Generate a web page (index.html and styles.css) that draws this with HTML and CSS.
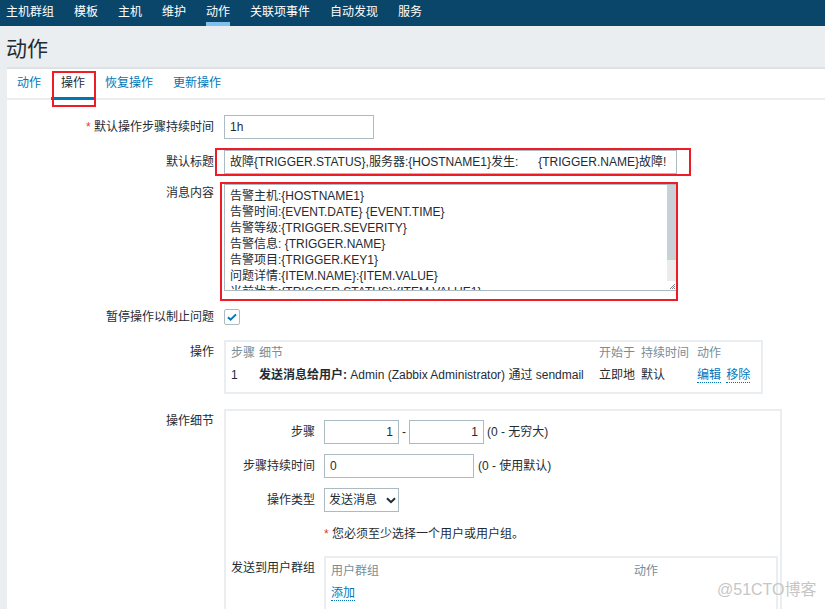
FILE: index.html
```html
<!DOCTYPE html>
<html lang="zh-CN">
<head>
<meta charset="utf-8">
<title>动作</title>
<link rel="stylesheet" href="styles.css">
</head>
<body>
<nav class="topnav">
  <a class="nav-item">主机群组</a>
  <a class="nav-item">模板</a>
  <a class="nav-item">主机</a>
  <a class="nav-item">维护</a>
  <a class="nav-item active">动作</a>
  <a class="nav-item">关联项事件</a>
  <a class="nav-item">自动发现</a>
  <a class="nav-item">服务</a>
</nav>
<header class="page-header"><h1 class="page-title">动作</h1></header>
<main class="panel">
  <div class="tabs">
    <a class="tab link">动作</a>
    <a class="tab active">操作</a>
    <a class="tab link">恢复操作</a>
    <a class="tab link">更新操作</a>
  </div>
  <div class="form">
    <div class="row r1">
      <div class="label"><span class="req">*</span> 默认操作步骤持续时间</div>
      <div class="control"><div class="input w150">1h</div></div>
    </div>
    <div class="row r2">
      <div class="label">默认标题</div>
      <div class="control"><div class="input w453 pre">故障{TRIGGER.STATUS},服务器:{HOSTNAME1}发生:      {TRIGGER.NAME}故障!</div></div>
    </div>
    <div class="row r3">
      <div class="label label-ta">消息内容</div>
      <div class="control">
        <div class="textarea">
          <div class="ta-text">
            <div>告警主机:{HOSTNAME1}</div>
            <div>告警时间:{EVENT.DATE} {EVENT.TIME}</div>
            <div>告警等级:{TRIGGER.SEVERITY}</div>
            <div>告警信息: {TRIGGER.NAME}</div>
            <div>告警项目:{TRIGGER.KEY1}</div>
            <div>问题详情:{ITEM.NAME}:{ITEM.VALUE}</div>
            <div>当前状态:{TRIGGER.STATUS}:{ITEM.VALUE1}</div>
          </div>
          <div class="ta-scroll">
            <div class="ta-thumb"></div>
            <div class="ta-track"></div>
            <div class="ta-grip">
              <svg width="9" height="9" viewBox="0 0 9 9"><path d="M7 3h1v1H7zM5 5h1v1H5zM7 5h1v1H7zM3 7h1v1H3zM5 7h1v1H5zM7 7h1v1H7zM6 4h1v1H6zM4 6h1v1H4zM6 6h1v1H6z" fill="#7a8791"/></svg>
            </div>
          </div>
        </div>
      </div>
    </div>
    <div class="row r4">
      <div class="label label-cb">暂停操作以制止问题</div>
      <div class="control">
        <div class="checkbox">
          <svg width="14" height="14" viewBox="0 0 14 14"><path d="M3 7.2l2.6 2.5L11 4.4" fill="none" stroke="#0275b8" stroke-width="2"/></svg>
        </div>
      </div>
    </div>
    <div class="row r5">
      <div class="label">操作</div>
      <div class="control">
        <div class="ops-box">
          <table class="ops">
            <thead>
              <tr><th class="c1">步骤</th><th class="c2">细节</th><th class="c3">开始于</th><th class="c4">持续时间</th><th class="c5">动作</th></tr>
            </thead>
            <tbody>
              <tr><td class="c1">1</td><td class="c2"><b>发送消息给用户:</b> Admin (Zabbix Administrator) 通过 sendmail</td><td class="c3">立即地</td><td class="c4">默认</td><td class="c5"><a class="dlink">编辑</a> <a class="dlink gap">移除</a></td></tr>
            </tbody>
          </table>
        </div>
      </div>
    </div>
    <div class="row r6">
      <div class="label">操作细节</div>
      <div class="control">
        <div class="details">
          <div class="drow">
            <div class="dlabel">步骤</div>
            <div class="dcontrol">
              <div class="input w75 right">1</div>
              <span class="dash">-</span>
              <div class="input w75 right">1</div>
              <span class="hint">(0 - 无穷大)</span>
            </div>
          </div>
          <div class="drow">
            <div class="dlabel">步骤持续时间</div>
            <div class="dcontrol">
              <div class="input w150">0</div>
              <span class="hint hint2">(0 - 使用默认)</span>
            </div>
          </div>
          <div class="drow">
            <div class="dlabel">操作类型</div>
            <div class="dcontrol">
              <div class="select">发送消息
                <svg class="chev" width="10" height="7" viewBox="0 0 10 7"><path d="M1 1.2l4 4 4-4" fill="none" stroke="#1f2c33" stroke-width="2"/></svg>
              </div>
            </div>
          </div>
          <div class="drow">
            <div class="dlabel"></div>
            <div class="dcontrol"><span class="req">*</span>&nbsp;您必须至少选择一个用户或用户组。</div>
          </div>
          <div class="drow">
            <div class="dlabel">发送到用户群组</div>
            <div class="dcontrol">
              <div class="groups">
                <div class="g-head"><span class="g-name">用户群组</span><span class="g-act">动作</span></div>
                <div class="g-add"><a class="dlink">添加</a></div>
              </div>
            </div>
          </div>
        </div>
      </div>
    </div>
  </div>
</main>
<div class="mark mark-tab"></div>
<div class="mark mark-title"></div>
<div class="mark mark-msg"></div>
<div class="watermark">@51CTO博客</div>
</body>
</html>
```

FILE: styles.css
```css
html, body {
  margin: 0;
  padding: 0;
}
body {
  width: 825px;
  height: 609px;
  overflow: hidden;
  position: relative;
  background: #ebeef0;
  color: #1f2c33;
  font-family: "Liberation Sans", Arial, "Noto Sans CJK SC", sans-serif;
  font-size: 12px;
}
a { text-decoration: none; cursor: pointer; }

.topnav {
  height: 26px;
  background: #0a466a;
  display: flex;
}
.nav-item {
  color: #fff;
  margin: 0 10px;
  line-height: 24px;
  height: 26px;
  box-sizing: border-box;
  white-space: nowrap;
}
.nav-item:first-child { margin-left: 6px; }
.nav-item.active {
  box-shadow: inset 0 -4px 0 #7fc1ec;
}

.page-header {
  height: 41px;
  box-sizing: border-box;
  padding: 11px 0 0 6px;
}
.page-title {
  margin: 0;
  font-size: 21px;
  font-weight: normal;
  line-height: 24px;
  color: #1f2c33;
}

.panel {
  margin-left: 7px;
  background: #fff;
  border-top: 2px solid #dde2e5;
  height: 540px;
}
.tabs {
  display: flex;
  height: 29px;
  border-bottom: 2px solid #ebeef0;
}
.tab {
  padding: 0 10px;
  line-height: 29px;
  height: 29px;
  color: #1f2c33;
  box-sizing: border-box;
}
.tab.link { color: #0275b8; }
.tab.active {
  box-shadow: inset 0 -3px 0 #0275b8;
  height: 31px;
}

.form {
  padding-top: 15px;
}
.row {
  display: flex;
  align-items: flex-start;
}
.label {
  width: 217px;
  flex: none;
  text-align: right;
  padding-right: 10px;
  box-sizing: border-box;
  line-height: 24px;
  white-space: nowrap;
}
.label-ta { line-height: 18px; }
.label-cb { line-height: 16px; }
.req { color: #e33734; }
.control { flex: 1; }

.r1 { margin-bottom: 11px; }
.r2 { margin-bottom: 10px; }
.r3 { margin-bottom: 18px; }
.r4 { margin-bottom: 15px; }
.r5 { margin-bottom: 15px; }

.input {
  height: 24px;
  box-sizing: border-box;
  border: 1px solid #acbbc2;
  padding: 0 5px;
  line-height: 22px;
  background: #fff;
  white-space: nowrap;
  overflow: hidden;
}
.pre { white-space: pre; }
.right { text-align: right; }
.w150 { width: 150px; }
.w453 { width: 453px; }
.w75 { width: 75px; }

.textarea {
  width: 453px;
  height: 107px;
  box-sizing: border-box;
  border: 1px solid #acbbc2;
  display: flex;
  overflow: hidden;
}
.ta-text {
  flex: 1;
  padding: 3px 5px 0 5px;
  line-height: 16px;
  overflow: hidden;
  white-space: nowrap;
}
.ta-scroll {
  width: 9px;
  flex: none;
  display: flex;
  flex-direction: column;
}
.ta-thumb { height: 75px; background: #c8d1d6; }
.ta-track { flex: 1; background: #ececec; }
.ta-grip { height: 9px; background: #fff; }
.ta-grip svg { display: block; }

.checkbox {
  width: 16px;
  height: 16px;
  box-sizing: border-box;
  border: 1px solid #acbbc2;
  border-radius: 2px;
  display: flex;
  align-items: center;
  justify-content: center;
}
.checkbox svg { display: block; }

.ops-box {
  width: 539px;
  height: 54px;
  box-sizing: border-box;
  border: 2px solid #ebeef0;
  padding: 1px 0 0 5px;
}
.ops {
  border-collapse: collapse;
  table-layout: fixed;
}
.ops th, .ops td {
  padding: 0;
  text-align: left;
  font-weight: normal;
  white-space: nowrap;
}
.ops th { color: #768d99; line-height: 20px; height: 20px; }
.ops td { line-height: 24px; height: 24px; }
.ops b { font-weight: bold; }
.c1 { width: 28px; }
.c2 { width: 340px; }
.c3 { width: 42px; }
.c4 { width: 56px; }
.c5 { width: 60px; }
.dlink {
  color: #0275b8;
  border-bottom: 1px dotted #0275b8;
}
.gap { margin-left: 2px; }

.details {
  width: 558px;
  height: 220px;
  box-sizing: border-box;
  border: 2px solid #ebeef0;
  border-bottom: none;
  padding-top: 9px;
}
.drow {
  display: flex;
  align-items: flex-start;
  margin-bottom: 10px;
}
.dlabel {
  width: 89px;
  flex: none;
  text-align: right;
  padding-right: 9px;
  line-height: 24px;
  white-space: nowrap;
}
.dcontrol {
  display: flex;
  align-items: center;
  line-height: 24px;
  white-space: nowrap;
}
.dash {
  width: 10px;
  text-align: center;
}
.hint { margin-left: 3px; }
.hint2 { margin-left: 4px; }
.select {
  width: 75px;
  height: 24px;
  box-sizing: border-box;
  border: 1px solid #acbbc2;
  padding-left: 4px;
  line-height: 22px;
  display: flex;
  align-items: center;
}
.chev { margin-left: 9px; }

.groups {
  width: 454px;
  height: 60px;
  box-sizing: border-box;
  border: 2px solid #ebeef0;
  border-bottom: none;
  padding: 4px 0 0 5px;
}
.g-head {
  display: flex;
  color: #768d99;
  line-height: 18px;
}
.g-name { width: 303px; }
.g-add { line-height: 26px; }

.mark {
  position: absolute;
  border: 2px solid #ee1c24;
  box-sizing: border-box;
}
.mark-tab { left: 52px; top: 71px; width: 44px; height: 36px; }
.mark-title { left: 215px; top: 148px; width: 476px; height: 28px; }
.mark-msg { left: 220px; top: 182px; width: 458px; height: 119px; }

.watermark {
  position: absolute;
  left: 717px;
  top: 580px;
  font-size: 16px;
  line-height: 20px;
  color: #c6c6c6;
  white-space: nowrap;
}
```
